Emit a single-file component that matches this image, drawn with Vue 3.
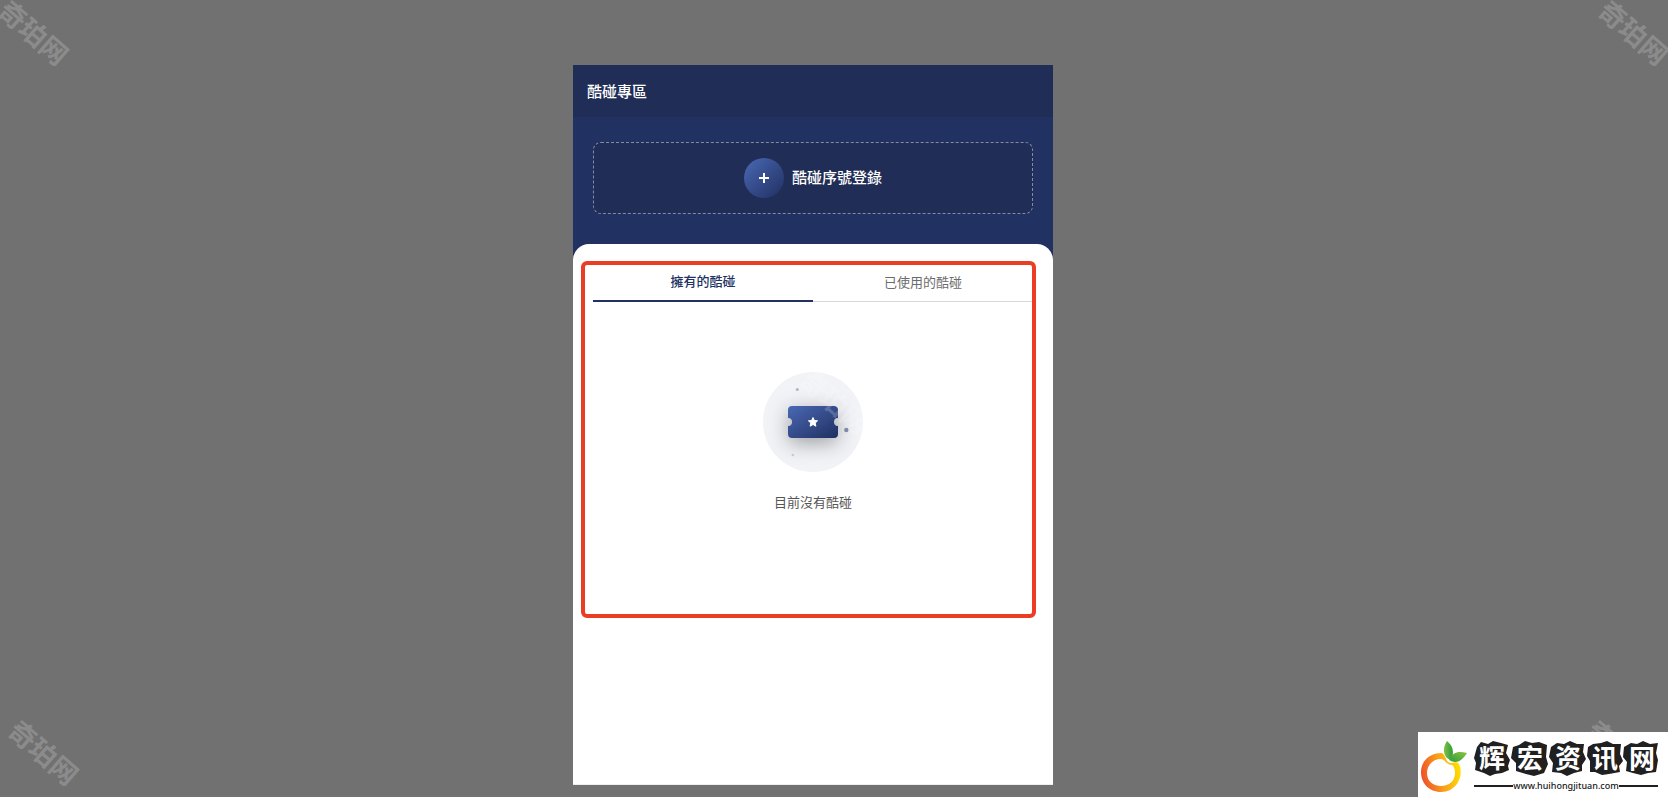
<script setup>
import { ref } from 'vue'

const tabs = [
  { id: 'owned', label: '擁有的酷碰' },
  { id: 'used', label: '已使用的酷碰' },
]
const active = ref('owned')
const marks = ['top-left', 'top-right', 'bottom-left', 'bottom-right', 'middle']
const logoChars = [
  { char: '辉', x: 74 },
  { char: '宏', x: 112 },
  { char: '资', x: 150 },
  { char: '讯', x: 187 },
  { char: '网', x: 224 },
]
</script>

<template>
  <div class="page">
    <main class="panel">
      <header class="bar"><h1>酷碰專區</h1></header>
      <section class="hero">
        <button class="register" type="button">
          <span class="plus">
            <svg width="10" height="10" viewBox="0 0 10 10" aria-hidden="true">
              <path d="M5 0V10M0 5H10" stroke="#fff" stroke-width="2" />
            </svg>
          </span>
          <span class="register-label">酷碰序號登錄</span>
        </button>
      </section>
      <section class="sheet">
        <div class="tabs" role="tablist">
          <button
            v-for="tab in tabs"
            :key="tab.id"
            type="button"
            role="tab"
            class="tab"
            :class="{ active: active === tab.id }"
            :aria-selected="active === tab.id"
            @click="active = tab.id"
          >{{ tab.label }}</button>
        </div>
        <div class="empty">
          <svg width="100" height="100" viewBox="0 0 100 100" aria-hidden="true">
            <defs>
              <linearGradient id="ticket-fill" x1="0" y1="0" x2="1" y2="1">
                <stop offset="0" stop-color="#4a69b5" />
                <stop offset="1" stop-color="#202f60" />
              </linearGradient>
              <filter id="ticket-shadow" x="-60%" y="-100%" width="220%" height="320%">
                <feDropShadow dx="0" dy="5" stdDeviation="10" flood-color="#000" flood-opacity="0.35" />
              </filter>
              <clipPath id="disc"><circle cx="50" cy="50" r="50" /></clipPath>
            </defs>
            <circle cx="50" cy="50" r="50" fill="#f2f3f7" />
            <g clip-path="url(#disc)">
              <path
                filter="url(#ticket-shadow)"
                fill="url(#ticket-fill)"
                d="M29 34H71A4 4 0 0 1 75 38V46A4 4 0 0 0 75 54V62A4 4 0 0 1 71 66H29A4 4 0 0 1 25 62V54A4 4 0 0 0 25 46V38A4 4 0 0 1 29 34Z"
              />
            </g>
            <path
              fill="#fff"
              stroke="#fff"
              stroke-linejoin="round"
              d="M50 45.5L51.4 48.5L54.6 48.8L52.2 51L52.9 54.2L50 52.5L47.1 54.2L47.8 51L45.4 48.8L48.6 48.5Z"
            />
            <circle cx="34.3" cy="17.5" r="1.6" fill="#afb7c8" />
            <circle cx="83.3" cy="58" r="2.2" fill="#808ba8" />
            <circle cx="29.8" cy="83" r="1.2" fill="#c3c8d3" />
          </svg>
          <p>目前沒有酷碰</p>
        </div>
        <div class="outline"></div>
      </section>
    </main>

    <span v-for="mark in marks" :key="mark" class="mark" :class="mark" aria-hidden="true">奇珀网</span>

    <aside class="logo">
      <svg width="250" height="65" viewBox="0 0 250 65" role="img" aria-label="辉宏资讯网">
        <defs>
          <linearGradient id="ring" x1="0" y1="0.6" x2="1" y2="0.4">
            <stop offset="0" stop-color="#ee4f2b" />
            <stop offset="0.5" stop-color="#f9a01b" />
            <stop offset="1" stop-color="#ffe100" />
          </linearGradient>
          <linearGradient id="leaf" x1="0" y1="0" x2="1" y2="0">
            <stop offset="0" stop-color="#7fc241" />
            <stop offset="1" stop-color="#2f9a3c" />
          </linearGradient>
          <linearGradient id="leaf-side" x1="0" y1="1" x2="1" y2="0">
            <stop offset="0" stop-color="#2f9a3c" />
            <stop offset="1" stop-color="#8bc53f" />
          </linearGradient>
        </defs>
        <path
          fill="url(#ring)"
          fill-rule="evenodd"
          d="M23 21C27 21 27 27 30 30C34 33 38 28 41 32C44 38 43 46 39 52C35 57 30 60 23 60C11 60 3 51 3 40C3 29 12 21 23 21ZM23 27C15 27 9 33 9 41C9 49 15 54 23 54C31 54 37 49 37 41C37 37 36 34 34 33C28 33 27 27 23 27Z"
        />
        <path fill="url(#leaf)" d="M29 9C35 14 36 19 34 27C31 28 28 26 27 23C25 18 26 14 29 9Z" />
        <path fill="url(#leaf-side)" d="M49 21C43 30 38 32 31 28C35 20 40 19 49 21Z" />
        <g fill="#202020">
          <path d="M59 15L63 10L70 12L75 9L83 11L90 13L88 21L92 28L90 34L91 38L84 41L77 42L72 44L66 41L57 38L58 31L56 26Z" />
          <path d="M95 15L101 13L107 9L114 11L121 10L129 13L128 25L130 32L126 41L116 44L108 42L98 39L98 31L93 26Z" />
          <path d="M133 15L139 11L146 12L152 9L159 12L166 12L165 20L168 27L164 33L164 39L156 41L149 44L143 41L134 40L135 31L131 25Z" />
          <path d="M170 15L175 12L183 11L189 9L195 12L203 12L202 22L205 29L201 34L202 40L191 42L184 43L177 40L172 40L172 29L169 24Z" />
          <path d="M206 15L213 11L219 12L225 9L232 12L240 11L238 21L240 28L238 40L230 41L223 43L215 41L208 39L209 30L205 25Z" />
        </g>
        <g class="logo-name">
          <text v-for="item in logoChars" :key="item.char" :x="item.x" y="36">{{ item.char }}</text>
        </g>
        <path d="M56 54H95M201 54H240" stroke="#202020" stroke-width="2" />
        <text class="logo-url" x="148" y="57">www.huihongjituan.com</text>
      </svg>
    </aside>
  </div>
</template>

<style>
body {
  margin: 0;
  background: #717171;
}
</style>

<style scoped>
.page {
  position: relative;
  box-sizing: border-box;
  display: flex;
  justify-content: center;
  min-height: 100vh;
  padding: 65px 42px 12px 0;
  overflow: hidden;
  background: #717171;
  font-family: "Noto Sans CJK TC", sans-serif;
}
.panel {
  box-sizing: border-box;
  display: flex;
  flex-direction: column;
  width: 100%;
  max-width: 480px;
  background: #203162;
  border-bottom: 1px solid #eee;
}
.bar {
  display: flex;
  align-items: center;
  height: 52px;
  padding: 0 14px;
  background: #202d56;
}
h1 {
  margin: 0;
  color: #fff;
  font-size: 15px;
  font-weight: 500;
  line-height: 24px;
}
button {
  margin: 0;
  font-family: inherit;
  cursor: pointer;
}
.hero {
  padding: 25px 20px 30px;
}
.register {
  box-sizing: border-box;
  display: flex;
  align-items: center;
  justify-content: center;
  gap: 8px;
  width: 100%;
  height: 72px;
  padding: 0;
  border: 1px dashed #858ba2;
  border-radius: 8px;
  background: #202d56;
  color: #fff;
  font-size: 15px;
  font-weight: 500;
  line-height: 24px;
}
.register-label {
  padding-bottom: 2px;
}
.plus {
  display: flex;
  align-items: center;
  justify-content: center;
  width: 40px;
  height: 40px;
  border-radius: 50%;
  background: linear-gradient(135deg, #4a69b5, #202f60);
}
.sheet {
  position: relative;
  flex: 1;
  padding: 20px;
  border-radius: 16px 16px 0 0;
  background: #fff;
}
.tabs {
  display: flex;
}
.tab {
  box-sizing: border-box;
  flex: 1;
  height: 38px;
  padding: 0 0 2px;
  border: 0;
  border-bottom: 1px solid #d8d8dc;
  background: none;
  color: #6c6c6c;
  font-size: 13px;
  font-weight: 400;
  line-height: 20px;
}
.tab.active {
  border-bottom: 2px solid #203162;
  color: #203162;
  font-weight: 500;
}
.empty {
  display: flex;
  flex-direction: column;
  align-items: center;
  gap: 20px;
  padding-top: 70px;
}
.empty p {
  margin: 0;
  color: #555;
  font-size: 13px;
  line-height: 20px;
}
.outline {
  position: absolute;
  top: 17px;
  right: 17px;
  left: 8px;
  box-sizing: border-box;
  height: 357px;
  border: 4px solid #eb3d24;
  border-radius: 6px;
  pointer-events: none;
}
.mark {
  position: absolute;
  width: 84px;
  color: rgba(255, 255, 255, 0.2);
  font-family: "Noto Sans CJK SC", sans-serif;
  font-size: 27px;
  font-weight: 700;
  line-height: 32px;
  text-align: center;
  white-space: nowrap;
  transform: rotate(41deg);
  pointer-events: none;
}
.top-left {
  top: 16px;
  left: -8px;
}
.top-right {
  top: 16px;
  right: -8px;
}
.bottom-left {
  bottom: 29px;
  left: 2px;
}
.bottom-right {
  right: 4px;
  bottom: 29px;
}
.middle {
  top: 385px;
  left: calc(50% - 41px);
}
.logo {
  position: absolute;
  right: 0;
  bottom: 0;
  background: #fff;
}
.logo svg {
  display: block;
}
.logo-name {
  fill: #fff;
  font-family: "Noto Sans CJK SC", sans-serif;
  font-size: 26px;
  font-weight: 700;
  text-anchor: middle;
}
.logo-url {
  fill: #202020;
  font-family: "Noto Sans", sans-serif;
  font-size: 9px;
  font-weight: 500;
  text-anchor: middle;
}
</style>
